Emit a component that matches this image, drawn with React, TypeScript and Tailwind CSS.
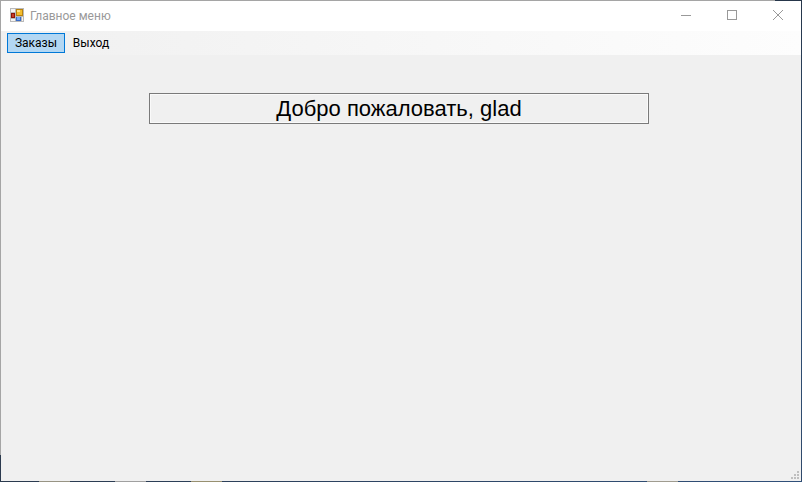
import React from "react";

const windowButton =
  "flex h-7 w-[46px] items-center justify-center text-[#999999]";

function AppIcon() {
  return (
    <svg width="14" height="14" viewBox="0 0 14 14" shapeRendering="crispEdges" aria-hidden="true">
      <rect width="14" height="14" fill="#b9b9b9" />
      <rect x="1" y="1" width="4" height="3" fill="#f4f4f4" />
      <rect x="1" y="11" width="4" height="2" fill="#f4f4f4" />
      <rect x="12" y="9" width="1" height="4" fill="#f4f4f4" />
      <rect x="1" y="5" width="4" height="5" fill="#8c1408" />
      <rect x="2" y="6" width="2" height="3" fill="#c83c28" />
      <rect x="6" y="1" width="7" height="7" fill="#b8820f" />
      <rect x="7" y="2" width="5" height="5" fill="#f3bd2e" />
      <rect x="7" y="2" width="3" height="2" fill="#fde28a" />
      <rect x="6" y="9" width="5" height="4" fill="#3a6cc8" />
      <rect x="7" y="9" width="3" height="3" fill="#79aaf2" />
    </svg>
  );
}

function TitleBar() {
  return (
    <header className="flex h-[30px] bg-white pl-[9px]">
      <div className="flex h-7 items-center">
        <AppIcon />
      </div>
      <h1 className="ml-[6px] flex-1 self-center text-[12px] leading-4 text-[#999999]">Главное меню</h1>
      <div className="flex">
        <button type="button" aria-label="Свернуть" className={windowButton}>
          <svg width="10" height="10" aria-hidden="true" shapeRendering="crispEdges">
            <path d="M0 5.5H10" stroke="currentColor" />
          </svg>
        </button>
        <button type="button" aria-label="Развернуть" className={windowButton}>
          <svg width="10" height="10" aria-hidden="true" shapeRendering="crispEdges">
            <rect x="0.5" y="0.5" width="9" height="9" fill="none" stroke="currentColor" />
          </svg>
        </button>
        <button type="button" aria-label="Закрыть" className={windowButton}>
          <svg width="10" height="10" aria-hidden="true">
            <path d="M0 0L10 10M10 0L0 10" stroke="currentColor" />
          </svg>
        </button>
      </div>
    </header>
  );
}

function MenuBar() {
  return (
    <nav className="flex h-6 items-center bg-linear-to-r from-[#f0f0f0] to-[#fdfdfd] pl-[6px] text-[12px] leading-4 text-black">
      <button type="button" className="h-5 w-[58px] border border-[#0078d7] bg-[#b3d7f3]">
        Заказы
      </button>
      <button type="button" className="h-5 w-[52px]">
        Выход
      </button>
    </nav>
  );
}

function SizeGrip() {
  return (
    <svg width="8" height="8" fill="#bfbfbf" shapeRendering="crispEdges" aria-hidden="true">
      <path d="M6 0h2v2h-2zM3 3h2v2h-2zM6 3h2v2h-2zM0 6h2v2h-2zM3 6h2v2h-2zM6 6h2v2h-2z" />
    </svg>
  );
}

export default function App() {
  return (
    <div className="flex min-h-screen flex-col bg-[#f0f0f0] font-[Roboto,'Noto_Sans',sans-serif]">
      <div className="flex h-px">
        <div className="flex-1 bg-[#a5a5a5]" />
        <div className="w-[27px] bg-[#26364a]" />
      </div>
      <div className="flex flex-1">
        <div className="flex w-px flex-col">
          <div className="flex-1 bg-[#a5a5a5]" />
          <div className="h-[26px] bg-[#2b3a4e]" />
        </div>
        <div className="flex flex-1 flex-col">
          <TitleBar />
          <MenuBar />
          <main className="flex flex-1 flex-col items-center px-4 pt-[38px]">
            <input
              type="text"
              readOnly
              aria-label="Приветствие"
              defaultValue="Добро пожаловать, glad"
              className="mr-1 h-[31px] w-full max-w-[500px] border border-[#7a7a7a] bg-[#f0f0f0] text-center font-['Liberation_Sans',Arial,sans-serif] text-[22px] leading-6 text-black inset-ring inset-ring-[#fafafa] outline-none"
            />
          </main>
          <footer className="flex justify-end pr-[2px] pb-[2px]">
            <SizeGrip />
          </footer>
        </div>
        <div className="w-px bg-linear-to-b from-[#26364a] via-[#2b5078] to-[#30496b]" />
      </div>
      <div className="flex h-px bg-linear-to-r from-[#2b3a4e] to-[#30507a]">
        <div className="ml-[39px] w-[31px] bg-[#989484]" />
        <div className="ml-[45px] w-[31px] bg-[#a0a0a0]" />
        <div className="ml-[45px] w-[31px] bg-[#989070]" />
        <div className="mr-[124px] ml-auto w-[31px] bg-[#a09c90]" />
      </div>
    </div>
  );
}
